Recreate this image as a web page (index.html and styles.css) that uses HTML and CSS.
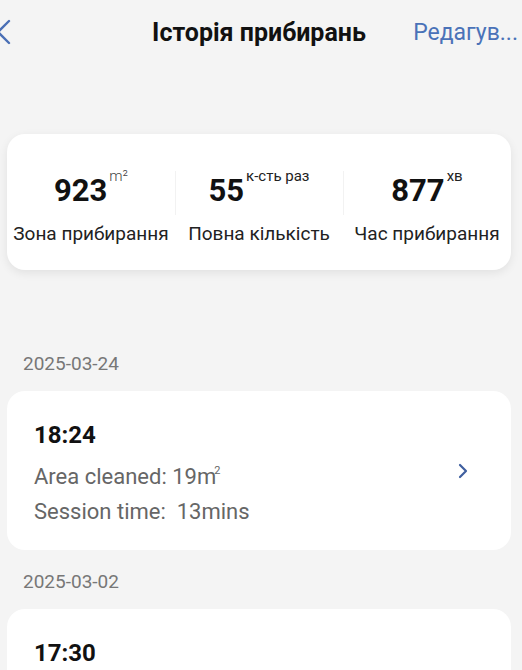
FILE: index.html
```html
<!DOCTYPE html>
<html lang="uk">
<head>
  <meta charset="utf-8">
  <meta name="viewport" content="width=device-width, initial-scale=1">
  <title>Історія прибирань</title>
  <link rel="stylesheet" href="styles.css">
</head>
<body>

  <div class="topbar">
    <svg class="back" width="14" height="28" viewBox="0 0 14 28">
      <path d="M9 3 L-2 14 L9 25" fill="none" stroke="#4a6fb5" stroke-width="2.4" stroke-linecap="round" stroke-linejoin="round"/>
    </svg>
    <div class="title">Історія прибирань</div>
    <div class="edit">Редагув...</div>
  </div>

  <div class="summary">
    <div class="stat">
      <div class="value">923<sup class="thin">m&sup2;</sup></div>
      <div class="label">Зона прибирання</div>
    </div>
    <div class="stat">
      <div class="value">55<sup>к-сть раз</sup></div>
      <div class="label">Повна кількість</div>
    </div>
    <div class="stat">
      <div class="value">877<sup>хв</sup></div>
      <div class="label">Час прибирання</div>
    </div>
  </div>

  <div class="day">2025-03-24</div>
  <div class="record">
    <div class="record-info">
      <div class="time">18:24</div>
      <div class="line">Area cleaned: 19m<sup>2</sup></div>
      <div class="line">Session time:&nbsp; 13mins</div>
    </div>
    <svg class="more" width="10" height="16" viewBox="0 0 10 16">
      <path d="M2 2 L8 8 L2 14" fill="none" stroke="#3f5f9f" stroke-width="2.2" stroke-linecap="round" stroke-linejoin="round"/>
    </svg>
  </div>

  <div class="day">2025-03-02</div>
  <div class="record">
    <div class="record-info">
      <div class="time">17:30</div>
      <div class="line">Area cleaned: 21m<sup>2</sup></div>
      <div class="line">Session time:&nbsp; 15mins</div>
    </div>
    <svg class="more" width="10" height="16" viewBox="0 0 10 16">
      <path d="M2 2 L8 8 L2 14" fill="none" stroke="#3f5f9f" stroke-width="2.2" stroke-linecap="round" stroke-linejoin="round"/>
    </svg>
  </div>

</body>
</html>
```

FILE: styles.css
```css
html, body {
  margin: 0;
  padding: 0;
}
body {
  background: #f4f4f4;
  font-family: "Roboto", "Noto Sans", sans-serif;
  color: #111;
  overflow: hidden;
  height: 670px;
}
.topbar {
  display: flex;
  align-items: center;
  height: 64px;
}
.back {
  flex: none;
}
.title {
  flex: none;
  width: 260px;
  margin-left: 115px;
  text-align: center;
  font-size: 25px;
  font-weight: bold;
  white-space: nowrap;
}
.edit {
  flex: none;
  margin-left: auto;
  font-size: 23px;
  color: #4a72b8;
  padding-right: 4px;
  white-space: nowrap;
}
.summary {
  display: flex;
  box-sizing: border-box;
  margin: 70px 11px 0 7px;
  height: 136px;
  padding-top: 39px;
  background: #fff;
  border-radius: 18px;
  box-shadow: 0 3px 10px rgba(0, 0, 0, 0.08);
}
.stat {
  flex: 1;
  text-align: center;
  position: relative;
}
.stat + .stat::before {
  content: "";
  position: absolute;
  left: 0;
  top: -2px;
  height: 44px;
  border-left: 1px solid #f2f2f2;
}
.value {
  font-size: 31px;
  font-weight: bold;
  line-height: 36px;
  white-space: nowrap;
}
.value sup {
  font-size: 15px;
  font-weight: normal;
  line-height: 0;
  vertical-align: baseline;
  position: relative;
  top: -20px;
  margin-left: 2px;
  color: #222;
}
.value sup.thin {
  font-weight: 300;
  color: #444;
}
.label {
  font-size: 19px;
  line-height: 24px;
  margin-top: 13px;
  color: #222;
  white-space: nowrap;
}
.day {
  font-size: 19px;
  color: #777;
  margin: 81px 0 0 23px;
  padding-top: 2px;
  line-height: 22px;
}
.record + .day {
  margin-top: 19px;
}
.record {
  display: flex;
  align-items: center;
  margin: 16px 11px 0 7px;
  height: 159px;
  background: #fff;
  border-radius: 18px;
}
.record-info {
  flex: 1;
  align-self: stretch;
  box-sizing: border-box;
  padding: 30px 0 0 27px;
}
.time {
  font-size: 24px;
  font-weight: bold;
  line-height: 28px;
  margin-bottom: 10px;
}
.line {
  font-size: 22px;
  color: #666;
  height: 35px;
  line-height: 35px;
  white-space: nowrap;
}
.line sup {
  font-size: 11px;
  line-height: 0;
  vertical-align: baseline;
  position: relative;
  top: -10px;
  margin-left: -2px;
}
.more {
  flex: none;
  margin-right: 43px;
}
```
